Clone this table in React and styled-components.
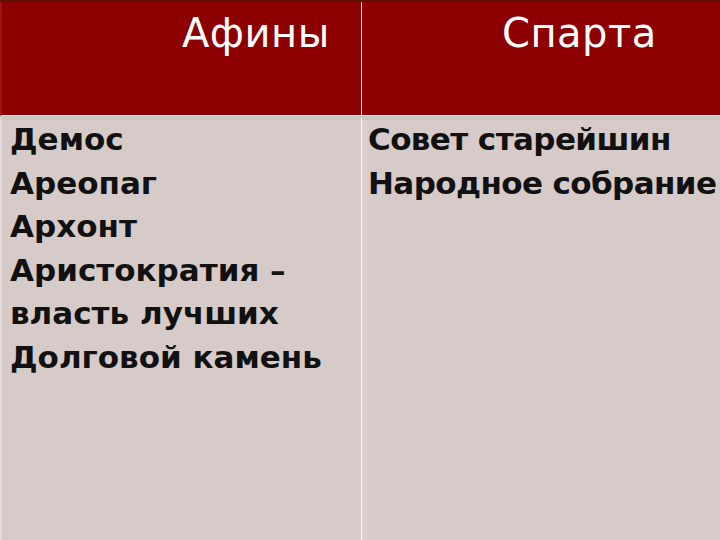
import React from "react";
import styled, { createGlobalStyle } from "styled-components";

const Global = createGlobalStyle`
  html, body { margin: 0; padding: 0; background: #d7cbc9; }
  body { overflow: hidden; }
`;

const Table = styled.div`
  width: 720px;
  height: 540px;
  display: grid;
  grid-template-columns: 361px 1fr;
  grid-template-rows: 114px 1fr;
  background: #d7cbc9;
  border-top: 2px solid #5c1208;
  box-sizing: border-box;
  font-family: "DejaVu Sans", "Noto Sans", sans-serif;
`;

const HeaderCell = styled.div`
  background: #8c0000;
  color: #ffffff;
  font-size: 40px;
  line-height: 1;
  padding: ${(p) => p.$pad};
  border-bottom: 1px solid #f6eaea;
  border-left: ${(p) => (p.$first ? "2px solid #9a1515" : "1px solid #f3e4e4")};
  box-sizing: border-box;
  text-align: left;
  letter-spacing: 0.5px;
`;

const BodyCell = styled.div`
  border-top: 4px solid #cdc7c4;
  border-left: ${(p) => (p.$first ? "2px solid #e6dada" : "1px solid #ffffff")};
  box-shadow: ${(p) => (p.$first ? "none" : "inset 5px 0 0 #dbd1cf")};
  box-sizing: border-box;
  padding: ${(p) => p.$pad};
  color: #111;
  font-size: 31px;
  line-height: 43.5px;
  font-weight: 700;
  letter-spacing: ${(p) => p.$ls || "0"};
  overflow: hidden;
`;

const Line = styled.div`
  white-space: nowrap;
  margin-top: ${(p) => (p.$first ? "-2px" : "0")};
`;

export default function App() {
  const athens = [
    "Демос",
    "Ареопаг",
    "Архонт",
    "Аристократия –",
    "власть лучших",
    "Долговой камень",
  ];
  const sparta = ["Совет старейшин", "Народное собрание"];
  return (
    <>
      <Global />
      <Table>
        <HeaderCell $first $pad="11px 0 0 180px">Афины</HeaderCell>
        <HeaderCell $pad="11px 0 0 140px">Спарта</HeaderCell>
        <BodyCell $first $pad="0 0 0 8px">
          {athens.map((t, i) => (
            <Line key={t} $first={i === 0}>{t}</Line>
          ))}
        </BodyCell>
        <BodyCell $pad="0 0 0 6px" $ls="-0.6px">
          {sparta.map((t, i) => (
            <Line key={t} $first={i === 0}>{t}</Line>
          ))}
        </BodyCell>
      </Table>
    </>
  );
}
